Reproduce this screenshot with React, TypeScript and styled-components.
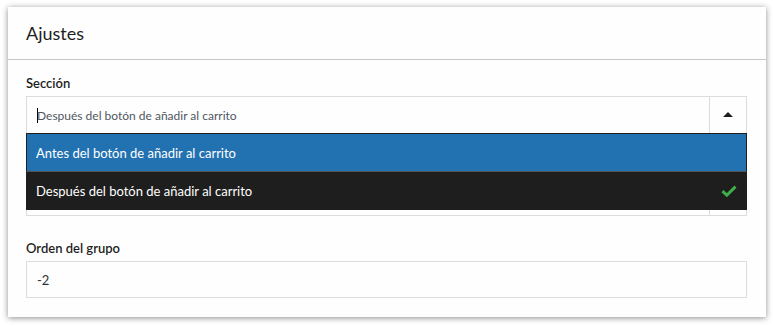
import * as React from "react";
import styled, { createGlobalStyle } from "styled-components";

const GlobalStyle = createGlobalStyle`
  html, body {
    margin: 0;
    padding: 0;
    background: #ffffff;
  }
  body {
    font-family: "Segoe UI", Lato, "Liberation Sans", sans-serif;
    color: #1e1e1e;
  }
`;

interface IOption {
  label: string;
  highlighted: boolean;
  selected: boolean;
}

const options: IOption[] = [
  { label: "Antes del botón de añadir al carrito", highlighted: true, selected: false },
  { label: "Después del botón de añadir al carrito", highlighted: false, selected: true }
];

const CheckIcon = () => (
  <svg width="16" height="12" viewBox="0 0 16 12">
    <path d="M1.5 6.2 L5.8 10.2 L14.5 1.6" fill="none" stroke="#3fae4a" strokeWidth="3" strokeLinejoin="miter" />
  </svg>
);

const App = () => (
  <Page>
    <GlobalStyle />
    <Card>
      <Header>Ajustes</Header>
      <Body>
        <Field>
          <Label>Sección</Label>
          <SelectBox>
            <SelectRow>
              <SelectValue>
                <Caret />
                Después del botón de añadir al carrito
              </SelectValue>
              <ArrowCell>
                <ArrowUp />
              </ArrowCell>
            </SelectRow>
            <Dropdown>
              {options.map((o, idx) => (
                <OptionRow key={idx} highlighted={o.highlighted} first={idx === 0}>
                  <span>{o.label}</span>
                  {o.selected && <CheckIcon />}
                </OptionRow>
              ))}
            </Dropdown>
          </SelectBox>
        </Field>
        <Field>
          <Label>Orden del grupo</Label>
          <Input>-2</Input>
        </Field>
      </Body>
    </Card>
  </Page>
);

const Page = styled.div`
  padding: 7px 7px 8px 8px;
`;

const Card = styled.div`
  width: 758px;
  height: 310px;
  background: #fefefe;
  box-shadow: 0 1px 6px rgba(0, 0, 0, 0.45);
  box-sizing: border-box;
`;

const Header = styled.div`
  height: 53px;
  box-sizing: border-box;
  border-bottom: 1px solid #c8c8c8;
  padding: 0 18px;
  display: flex;
  align-items: center;
  font-size: 18px;
  color: #1e1e1e;
`;

const Body = styled.div`
  padding: 15px 19px 0 18px;
  display: flex;
  flex-direction: column;
  gap: 24px;
`;

const Field = styled.div`
  display: flex;
  flex-direction: column;
`;

const Label = styled.div`
  font-size: 13px;
  font-weight: 600;
  color: #1e1e1e;
  height: 21px;
  line-height: 17px;
`;

const SelectBox = styled.div`
  position: relative;
  height: 120px;
  border: 1px solid #dcdcde;
  box-sizing: border-box;
  display: flex;
  flex-direction: column;
`;

const SelectRow = styled.div`
  height: 36px;
  display: flex;
`;

const SelectValue = styled.div`
  flex: 1;
  display: flex;
  align-items: center;
  padding-left: 10px;
  font-size: 12px;
  color: #50575e;
`;

const Caret = styled.span`
  display: inline-block;
  width: 1px;
  height: 15px;
  background: #000;
  margin-right: -1px;
`;

const ArrowCell = styled.div`
  width: 37px;
  height: 118px;
  border-left: 1px solid #dcdcde;
  display: flex;
  justify-content: center;
  padding-top: 15px;
  box-sizing: border-box;
`;

const ArrowUp = styled.span`
  width: 0;
  height: 0;
  border-left: 5px solid transparent;
  border-right: 5px solid transparent;
  border-bottom: 5px solid #1e1e1e;
`;

const Dropdown = styled.div`
  position: absolute;
  top: 36px;
  left: -1px;
  right: -1px;
  border-top: 1px solid #1e1e1e;
  background: #1e1e1e;
`;

const OptionRow = styled.div<{ highlighted: boolean; first: boolean }>`
  height: 38px;
  box-sizing: border-box;
  display: flex;
  align-items: center;
  justify-content: space-between;
  padding: 0 9px 0 9px;
  font-size: 13px;
  color: #ffffff;
  background: ${props => (props.highlighted ? "#2271b1" : "#1e1e1e")};
  border-left: 1px solid #1e1e1e;
  border-right: 1px solid #1e1e1e;
  border-bottom: ${props => (props.first ? "1px solid #555" : "none")};
`;

const Input = styled.div`
  height: 37px;
  box-sizing: border-box;
  border: 1px solid #dcdcde;
  display: flex;
  align-items: center;
  padding-left: 10px;
  font-size: 13px;
  color: #2c3338;
`;

export default App;
